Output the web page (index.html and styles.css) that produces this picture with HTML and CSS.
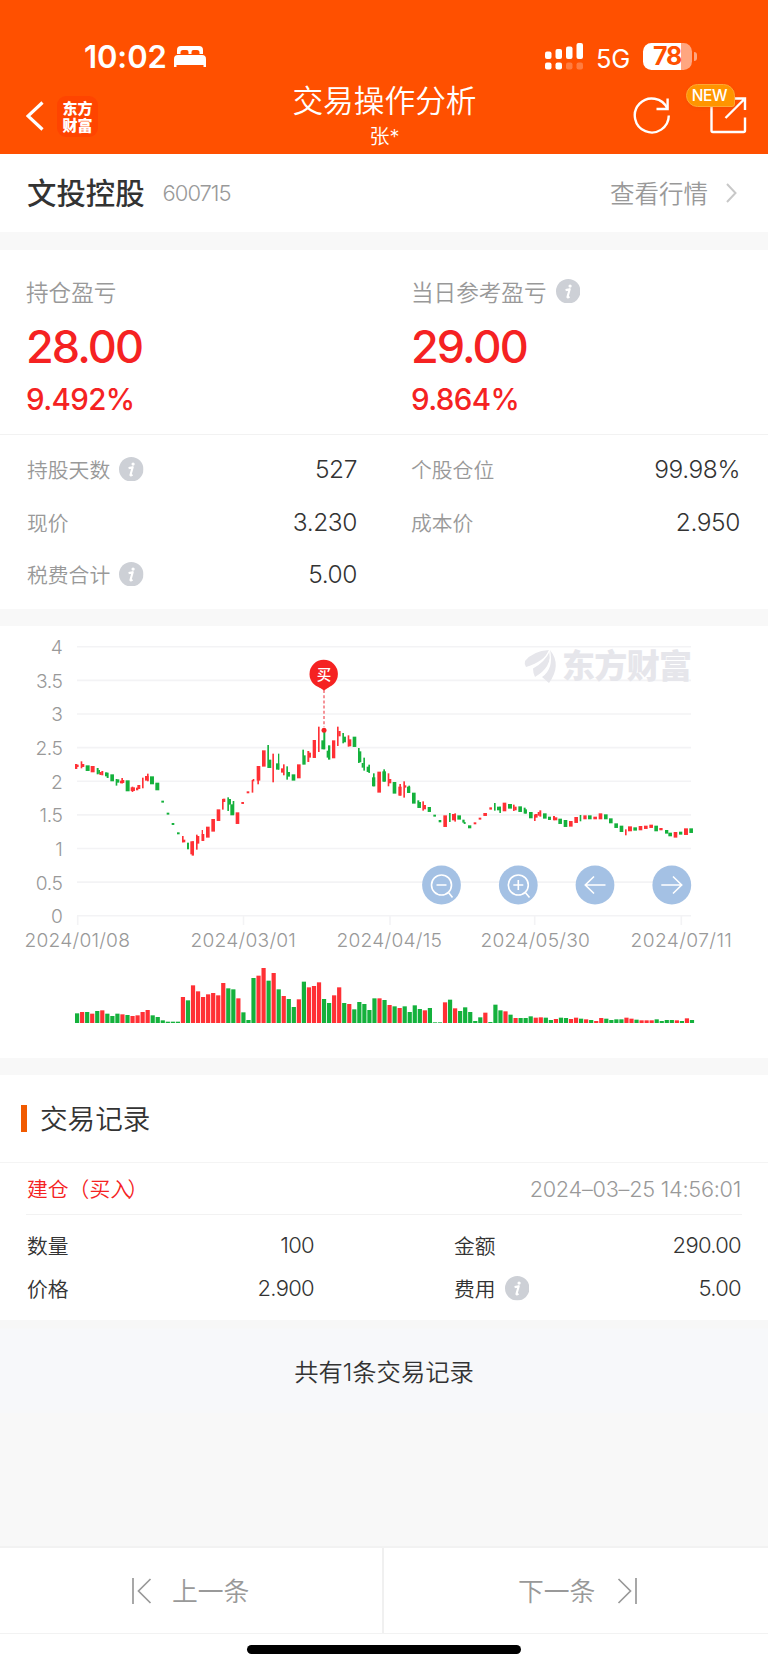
FILE: index.html
```html
<!DOCTYPE html>
<html lang="zh-CN">
<head>
<meta charset="utf-8">
<title>交易操作分析</title>
<link rel="stylesheet" href="styles.css">
</head>
<body>
<svg class="defs" width="0" height="0" aria-hidden="true">
  <symbol id="info" viewBox="0 0 24 24">
    <circle cx="12" cy="12" r="12" fill="#cdd0d6"/>
    <circle cx="13.8" cy="6.9" r="1.6" fill="#fff"/>
    <path d="M9.400 10.900L13.400 10L11.300 17.400Q11 18.600 13.200 17.200" fill="none" stroke="#fff" stroke-width="2.100" stroke-linejoin="round"/>
  </symbol>
</svg>
<header class="header">
  <div class="status">
    <div class="status-left">
      <span class="clock">10:02</span>
      <svg width="32" height="22" viewBox="0 0 32 22" fill="#fff"><path d="M3 8V4Q3 0 7 0H25Q29 0 29 4V8H25.500V6.500Q25.500 4 23 4H19.500Q17.500 4 17.500 6V8H14.500V6Q14.500 4 12.500 4H9Q6.500 4 6.500 6.500V8Z"/><path d="M0 21V13Q0 9 4 9H28Q32 9 32 13V21H29.500V19H2.500V21Z"/></svg>
    </div>
    <div class="status-right">
      <svg width="39" height="27" viewBox="0 0 39 27" fill="#fff"><rect x="0" y="8.500" width="6.500" height="7.500" rx="2"/><rect x="10.500" y="6" width="6.500" height="10" rx="2"/><rect x="21" y="3.500" width="6.500" height="12.500" rx="2"/><rect x="31.500" y="0" width="6.500" height="16" rx="2"/><rect x="0" y="19.500" width="6.500" height="7" rx="2"/><rect x="10.500" y="19.500" width="6.500" height="7" rx="2"/><rect x="21" y="19.500" width="6.500" height="7" rx="2" opacity=".25"/><rect x="31.500" y="19.500" width="6.500" height="7" rx="2" opacity=".25"/></svg>
      <span class="network">5G</span>
      <span class="battery">78</span><span class="battery-tip"></span>
    </div>
  </div>
  <div class="nav">
    <div class="nav-left">
      <svg width="18" height="30" viewBox="0 0 18 30"><path d="M16.500 1.500L2 15L16.500 28.500" fill="none" stroke="#fff" stroke-width="3.200"/></svg>
      <div class="logo"><span>东方</span><span>财富</span></div>
    </div>
    <div class="nav-title"><h1>交易操作分析</h1><p>张*</p></div>
    <div class="nav-right">
      <svg width="38" height="38" viewBox="0 0 38 38" fill="none" stroke="#fff" stroke-width="2.400"><path d="M34.300 12.500A17 17 0 1 0 35.800 19.600"/><path d="M34.600 2.500V13H23.500"/></svg>
      <div class="share">
        <svg width="38" height="38" viewBox="0 0 38 38" fill="none" stroke="#fff" stroke-width="2.400"><path d="M20 2.500H3.500Q2.500 2.500 2.500 3.500V34.500Q2.500 36 4 36H34.500Q36 36 36 34.500V21.500"/><path d="M25 2.500H36V14M36 2.500L16.500 22"/></svg>
        <span class="badge">NEW</span>
      </div>
    </div>
  </div>
</header>

<section class="stock">
  <div class="stock-name"><h2>文投控股</h2><span>600715</span></div>
  <a class="quote"><span>查看行情</span><svg width="11" height="20" viewBox="0 0 11 20"><path d="M1 1L9.500 10L1 19" fill="none" stroke="#c8c8c8" stroke-width="2"/></svg></a>
</section>

<section class="profit">
  <div><div class="caption">持仓盈亏</div><div class="amount">28.00</div><div class="percent">9.492%</div></div>
  <div><div class="caption">当日参考盈亏<svg class="info"><use href="#info"/></svg></div><div class="amount">29.00</div><div class="percent">9.864%</div></div>
</section>

<section class="metrics">
  <div class="metric"><span>持股天数<svg class="info"><use href="#info"/></svg></span><b>527</b></div>
  <div class="metric"><span>个股仓位</span><b>99.98%</b></div>
  <div class="metric"><span>现价</span><b>3.230</b></div>
  <div class="metric"><span>成本价</span><b>2.950</b></div>
  <div class="metric"><span>税费合计<svg class="info"><use href="#info"/></svg></span><b>5.00</b></div>
</section>

<section class="chart">
  <svg id="chart" width="768" height="432" viewBox="0 626 768 432">
    <g id="grid" class="grid"></g>
    <g id="axis" class="axis"></g>
    <g class="watermark">
      <path d="M525 661Q533 651 549 650Q545 661 526 667Q524 664 525 661Z"/>
      <path d="M533 668.500Q545 662 550 651Q552 667 535 677Q533 673 533 668.500Z"/>
      <path d="M550 650Q562 665 549 683L542 677Q554 669 550 650Z"/>
      <path d="M532 667.500Q545 661 549.500 650M540 677.500Q553 667 549.500 650" fill="none" stroke="#fff" stroke-width="1"/>
      <text x="562" y="678" textLength="130">东方财富</text>
    </g>
    <g id="candles"></g>
    <g id="volume"></g>
    <path d="M324 690V727" stroke="#f59499" stroke-width="2" stroke-dasharray="3 2.200"/>
    <circle cx="324" cy="730.200" r="2.500" fill="#f52222"/>
    <path d="M318 686.500L324 690.500L330 686.500Z" fill="#f52222"/>
    <circle cx="323.700" cy="674" r="14.200" fill="#f52222"/>
    <text class="pin" x="324" y="679.500">买</text>
    <g class="tools">
      <circle cx="441.500" cy="885" r="19.400"/><circle cx="518.300" cy="885" r="19.400"/><circle cx="595" cy="885" r="19.400"/><circle cx="671.800" cy="885" r="19.400"/>
      <path d="M436.500 885H446.500M448.500 892.500L452.500 897.500M513.300 885H523.300M518.300 880V890M525.300 892.500L529.500 897.500"/>
      <circle class="lens" cx="441.500" cy="885" r="10"/><circle class="lens" cx="518.300" cy="885" r="10"/>
      <path d="M605.500 885H585.500M594 876.500L585.300 885L594 893.500M661.300 885H681.300M673 876.500L681.700 885L673 893.500"/>
    </g>
  </svg>
</section>

<section class="records">
  <h2 class="records-title">交易记录</h2>
  <article class="record">
    <div class="record-head"><span>建仓（买<i>入</i>）</span><time>2024–03–25 14:56:01</time></div>
    <div class="record-body">
      <div><span>数量</span><b>100</b></div><div><span>金额</span><b>290.00</b></div>
      <div><span>价格</span><b>2.900</b></div><div><span>费用<svg class="info"><use href="#info"/></svg></span><b>5.00</b></div>
    </div>
  </article>
</section>
<p class="total">共有1条交易记录</p>

<footer class="footer">
  <div class="pager">
    <a><svg width="20" height="26" viewBox="0 0 20 26"><path d="M1 0V26M18.500 1L6.500 13L18.500 25"/></svg><span>上一条</span></a>
    <a><span>下一条</span><svg width="20" height="26" viewBox="0 0 20 26"><path d="M19 0V26M1.500 1L13.500 13L1.500 25"/></svg></a>
  </div>
  <div class="home"></div>
</footer>
<script src="chart.js"></script>
</body>
</html>
```
FILE: styles.css
```css
* { box-sizing: border-box; margin: 0; padding: 0; }
body { width: 768px; height: 1669px; display: flex; flex-direction: column; background: #f8f8f8; color: #333; font-family: Inter, "Noto Sans CJK SC", sans-serif; overflow: hidden; }
h1, h2, b { font-weight: 400; }
i { font-style: normal; }
svg { display: block; flex: none; }
.defs { position: absolute; }
.info { width: 24.5px; height: 24.5px; }

.header { height: 154px; background: #ff5000; color: #fff; }
.status { height: 80px; padding: 34px 71px 0 84px; display: flex; justify-content: space-between; }
.status-left, .status-right { height: 46px; display: flex; align-items: center; }
.status-left { gap: 8px; }
.clock { font-size: 31px; font-weight: 600; line-height: 46px; letter-spacing: -0.1px; width: 82px; white-space: nowrap; }
.status-right { align-items: flex-start; padding-top: 9px; }
.network { margin: 0 13px 0 12px; width: 34px; font-size: 25.5px; line-height: 31px; letter-spacing: -0.3px; }
.battery { width: 49px; height: 27px; border-radius: 8.5px; background: linear-gradient(90deg, #fff 38px, #ffa680 38px); color: #ff5000; font-size: 25px; font-weight: 700; line-height: 27px; letter-spacing: -1.1px; padding-left: 10px; }
.battery-tip { width: 3px; height: 9px; margin: 9px 0 0 2px; border-radius: 0 4px 4px 0; background: #ffa680; }
.nav { height: 74px; padding: 0 21px 0 26px; display: grid; grid-template-columns: 1fr 190px 1fr; }
.nav-left { display: flex; align-items: center; gap: 13px; padding-bottom: 2px; }
.logo { width: 41px; height: 41px; border-radius: 9px; background: #ff4400; display: flex; flex-direction: column; align-items: center; justify-content: center; font-family: "Noto Sans CJK SC", sans-serif; font-size: 15px; font-weight: 900; line-height: 17px; }
.nav-title { text-align: center; margin-left: -2px; margin-right: 2px; }
.nav-title h1 { font-size: 30.7px; font-weight: 350; line-height: 42px; white-space: nowrap; }
.nav-title p { font-size: 20px; font-weight: 350; line-height: 31px; }
.nav-right { display: flex; justify-content: flex-end; align-items: flex-start; gap: 38px; padding-top: 16px; }
.share { position: relative; }
.badge { position: absolute; left: -23px; top: -12px; width: 49px; height: 23px; border: 1px solid #ffa733; border-radius: 12px 12px 3px 12px; background: #ff9500; font-size: 15.5px; font-weight: 500; line-height: 22px; text-align: center; letter-spacing: -0.3px; padding-right: 2px; box-shadow: 0 1px 3px #e0480055; }

.stock { height: 78px; padding: 0 31px 0 27px; background: #fff; display: flex; justify-content: space-between; align-items: center; }
.stock-name, .quote { display: flex; align-items: center; }
.stock-name h2 { font-size: 29.4px; font-weight: 500; line-height: 44px; padding-top: 1px; }
.stock-name span { margin-left: 18px; color: #999; font-size: 22px; font-weight: 350; letter-spacing: -1px; }
.quote { gap: 18px; color: #999; font-size: 24.5px; font-weight: 350; }
.quote span { padding-bottom: 2px; }

.profit { height: 184px; margin-top: 18px; padding: 25px 27px 0 26px; background: #fff; display: grid; grid-template-columns: 385px 1fr; }
.caption { height: 32px; display: flex; align-items: center; gap: 9px; color: #999; font-size: 22.6px; font-weight: 350; }
.amount { margin-top: 10px; height: 60px; color: #f52222; font-size: 45px; font-weight: 500; line-height: 60px; letter-spacing: -1.9px; }
.percent { margin-top: 2px; height: 40px; color: #f52222; font-size: 29.5px; font-weight: 500; line-height: 40px; letter-spacing: -0.6px; }

.metrics { height: 175px; padding: 8px 28px 0 27px; border-top: 1px solid #f2f2f2; background: #fff; display: grid; grid-template-columns: 330px 329px; column-gap: 54px; grid-auto-rows: 52.4px; }
.metric, .metric span { display: flex; align-items: center; }
.metric { justify-content: space-between; }
.metric span { gap: 9px; color: #999; font-size: 20.8px; font-weight: 350; }
.metric b { font-size: 24.5px; font-weight: 350; letter-spacing: -0.4px; }

.chart { height: 432px; margin-top: 17px; background: #fff; }
.grid path { stroke: #f3f3f5; stroke-width: 1.6; }
.axis text { fill: #999; font-size: 19.2px; font-weight: 350; letter-spacing: -0.4px; text-anchor: middle; }
.axis .y { text-anchor: end; }
.watermark { fill: #e6e6eb; }
.watermark text { font-family: "Noto Sans CJK SC", sans-serif; font-size: 33px; font-weight: 900; }
.up { fill: #ff3035; }
.down { fill: #14b13c; }
.pin { fill: #fff; font-size: 14.5px; font-weight: 500; text-anchor: middle; }
.tools circle { fill: #a4c1e4; }
.tools path, .tools .lens { fill: none; stroke: #fff; stroke-width: 1.6; }

.records { height: 245px; margin-top: 17px; background: #fff; }
.records-title { height: 88px; padding: 0 0 3px 21px; border-bottom: 1px solid #f4f4f4; display: flex; align-items: center; gap: 13px; font-size: 27.6px; font-weight: 350; }
.records-title::before { content: ""; width: 6px; height: 27px; margin-top: 3px; background: #f15a00; }
.record { padding: 0 26px; }
.record-head { height: 52px; border-bottom: 1px solid #f2f2f2; display: flex; align-items: center; justify-content: space-between; padding: 0 1px; color: #f52222; font-size: 20.8px; font-weight: 350; }
.record-head span { padding-bottom: 2px; }
.record-head i { letter-spacing: -3.5px; }
.record-head time { color: #999; font-size: 21.7px; letter-spacing: -0.25px; font-weight: 350; }
.record-body { padding: 8px 2px 0 1px; display: grid; grid-template-columns: 286px 286px; column-gap: 141px; grid-auto-rows: 43.5px; }
.record-body div, .record-body span { display: flex; align-items: center; }
.record-body div { justify-content: space-between; }
.record-body span { gap: 9px; font-size: 20.8px; font-weight: 350; }
.record-body b { font-size: 22px; font-weight: 350; letter-spacing: -0.7px; margin-right: -1px; }
.total { height: 93px; padding: 32px 0 21px; background: linear-gradient(#f7f7f7 8px, #f7f8fa 9px); font-size: 24.3px; font-weight: 350; line-height: 40px; text-align: center; }

.footer { height: 123px; margin-top: auto; background: #fff; }
.pager { height: 88px; border-top: 2px solid #f2f2f2; border-bottom: 1px solid #f2f2f2; display: grid; grid-template-columns: 1fr 1fr; }
.pager a { display: flex; align-items: center; color: #999; font-size: 25.8px; font-weight: 350; }
.pager span { padding-bottom: 3px; }
.pager a:first-child { padding-left: 132px; gap: 20px; border-right: 2px solid #f0f0f0; }
.pager a:last-child { padding-left: 134px; gap: 22px; }
.pager path { fill: none; stroke: #999; stroke-width: 1.7; }
.home { width: 274px; height: 9px; margin: 11px auto 0; border-radius: 5px; background: #000; }
```
FILE: chart.js
```js
const NS = 'http://www.w3.org/2000/svg';
function add(parent, name, attrs, text) {
  const el = document.createElementNS(NS, name);
  for (const key in attrs) el.setAttribute(key, attrs[key]);
  if (text) el.textContent = text;
  document.getElementById(parent).appendChild(el);
}

[4, 3.5, 3, 2.5, 2, 1.5, 1, 0.5, 0].forEach((v, i) => {
  add('grid', 'path', { d: `M77 ${646.7 + i * 33.63}H691` });
  add('axis', 'text', { class: 'y', x: 62.5, y: 654 + i * 33.67 }, String(v));
});
[['2024/01/08', 77, 105], ['2024/03/01', 243, 105], ['2024/04/15', 389, 105], ['2024/05/30', 535, 109], ['2024/07/11', 681, 101]].forEach(([label, x, len]) => {
  add('axis', 'text', { x, y: 946.5, textLength: len }, label);
});
[77.7, 243.5, 390, 534.7, 681.3].forEach(x => add('grid', 'path', { d: `M${x} 916V925` }));

// Candle rectangles per panel in thirds of a pixel: x,y,width,height.
const panels = [
  { x: 20,
    up: '165,402,6,14 171,404,4,6 182,394,4,20 186,402,6,8 212,408,11,18 238,426,6,8 244,423,5,12 300,452,8,7 304,444,4,15 308,450,4,8 332,472,12,10 335,470,4,15 348,473,6,7 352,465,8,11 366,443,4,31 375,438,10,13 381,431,4,22 486,618,4,18 486,629,9,7 511,634,10,38 515,634,6,42 528,614,4,44 531,618,6,22 545,600,3,32 545,612,7,20 558,590,10,32 574,567,10,37 590,538,10,34 606,507,4,31 608,506,7,9 647,547,10,34',
    down: '197,406,11,16 230,414,5,18 235,420,4,10 255,427,6,11 260,428,5,15 271,433,10,20 287,447,4,19 290,448,7,9 317,451,11,32 390,439,11,23 406,458,11,22 424,512,7,5 440,548,7,5 455,579,7,5 471,607,7,5 501,638,5,19 622,502,4,40 625,507,7,16 631,523,10,32 638,513,4,40' },
  { x: 240,
    up: '4,516,7,5 20,484,7,5 35,450,4,37 38,447,4,6 50,408,10,43 52,408,4,54 66,361,10,48 97,371,4,85 123,415,8,12 129,403,4,32 171,403,10,41 202,363,5,32 207,368,5,14 218,330,9,53 234,290,4,75 276,331,9,53 291,290,4,57 295,303,6,15 323,316,4,33 325,328,8,20 412,425,10,62 443,430,4,38 446,447,7,12 475,470,9,26 478,462,4,34 490,454,4,48 493,466,5,6 547,514,4,27 551,525,6,12 610,556,10,34 636,552,11,18 643,550,4,24 701,577,7,5 716,563,7,5 730,549,10,8',
    down: '82,345,4,68 86,389,7,24 108,400,9,18 114,371,3,47 139,409,4,39 142,426,7,13 155,433,10,18 187,359,4,44 191,376,5,27 244,331,9,26 250,303,5,54 260,362,5,20 264,346,6,42 307,309,4,30 310,320,7,16 338,320,10,30 354,354,4,44 357,364,6,32 365,399,5,13 370,383,4,38 380,410,6,15 385,404,4,24 396,442,9,26 399,430,4,38 427,424,10,30 430,418,4,36 458,456,10,34 501,470,9,18 505,467,4,21 516,488,10,32 532,511,5,22 535,516,7,17 563,531,9,14 580,554,7,5 596,570,7,6 627,549,4,26 652,556,10,12 667,569,6,8 671,576,5,5 684,586,9,8' },
  { x: 470,
    up: '58,532,7,6 98,518,10,25 129,524,4,18 133,530,6,10 192,554,4,18 194,552,8,10 203,546,5,10 208,541,5,18 249,558,5,12 253,562,8,8 297,573,10,16 313,561,10,17 340,556,9,11 370,560,10,7 386,550,10,17 465,598,4,17 474,589,11,14 506,588,10,12 522,587,10,9 538,584,10,9 568,594,9,6 611,606,10,16 642,595,11,19',
    down: '72,519,4,22 81,530,10,10 88,530,4,18 114,522,11,13 145,529,10,16 161,533,5,17 165,538,5,12 177,546,10,18 219,550,10,15 234,560,8,9 265,566,10,15 281,570,10,20 329,555,4,18 354,556,10,11 402,553,10,14 417,565,10,14 433,580,10,13 449,587,10,18 490,592,10,9 553,587,10,16 585,600,9,10 595,608,10,10 627,605,9,8 658,595,10,13' }
];
for (const panel of panels) {
  for (const kind of ['up', 'down']) {
    for (const rect of panel[kind].split(' ')) {
      const [x, y, w, h] = rect.split(',').map(n => n / 3);
      add('candles', 'rect', { class: kind, x: panel.x + x, y: 630 + y, width: w + 0.3, height: h + 0.3 });
    }
  }
}

// Volume heights in thirds of a pixel; r = rising day, g = falling day.
const volume = 'g29 r33 g33 r28 g36 r38 g28 g21 g28 r26 g24 r21 r23 r33 r39 g23 g18 g8 g4 g4 g4 r78 g68 r113 r95 r78 r86 r90 r83 r120 g104 g101 r74 g32 g9 g135 r142 r165 g127 r150 g101 r81 g72 g48 r71 g124 r107 r111 r122 g72 g60 r83 r107 g60 r57 g41 g63 g57 g39 g74 r74 g69 r54 g50 r45 g50 g33 g53 g42 r38 g45 g2 g2 r62 g70 r44 g36 g47 g33 g6 g17 r31 g3 g55 g38 r35 g25 r15 g15 g15 g20 r16 r17 g16 g9 r12 g16 g15 r12 r16 g13 r11 g9 r6 r15 g13 g9 g11 g11 r16 r13 g10 r8 r8 r8 g11 g6 g9 g9 r8 g6 r14 g9';
volume.split(' ').forEach((v, i) => {
  const h = Number(v.slice(1)) / 3;
  add('volume', 'rect', { class: v[0] === 'r' ? 'up' : 'down', x: 75 + i * 5.04, y: 1023 - h, width: 4.2, height: h });
});
```
